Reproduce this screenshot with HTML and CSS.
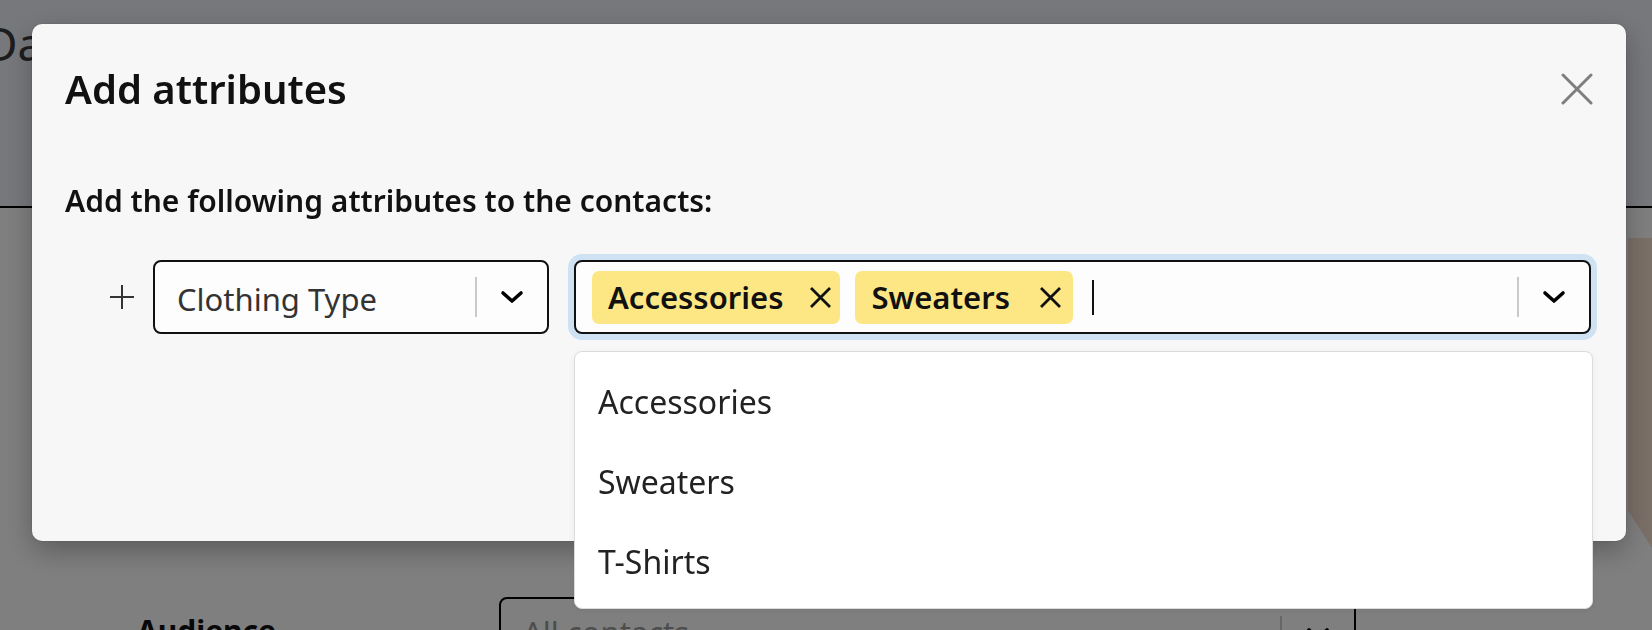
FILE: index.html
```html
<!DOCTYPE html>
<html lang="en">
<head>
<meta charset="utf-8">
<title>Add attributes</title>
<link rel="stylesheet" href="styles.css">
</head>
<body>
<div class="page">
  <header class="page-header">
    <h1 class="page-title">Dashboard</h1>
  </header>
  <main class="page-main">
    <div class="page-content">
      <div class="form-row">
        <span class="form-label">Audience</span>
        <div class="fake-select">
          <span class="fake-select-text">All contacts</span>
          <span class="fake-sep"></span>
          <span class="fake-chev">
            <svg width="24" height="14" viewBox="0 0 24 14"><path d="M3 3 L12 11 L21 3" fill="none" stroke="#000" stroke-width="3.6" stroke-linecap="round" stroke-linejoin="round"/></svg>
          </span>
        </div>
      </div>
    </div>
    <div class="hero"></div>
  </main>
</div>

<div class="overlay">
  <div class="modal" role="dialog" aria-labelledby="modal-title">
    <div class="modal-header">
      <h2 class="modal-title" id="modal-title">Add attributes</h2>
      <button class="close-btn" aria-label="Close">
        <svg width="32" height="32" viewBox="0 0 32 32"><path d="M2 2 L30 30 M30 2 L2 30" stroke="#7f7f7f" stroke-width="3" stroke-linecap="round"/></svg>
      </button>
    </div>
    <p class="modal-subtitle">Add the following attributes to the contacts:</p>
    <div class="attr-row">
      <span class="plus-icon">
        <svg width="24" height="26" viewBox="0 0 24 26"><path d="M12 1 V25 M0 13 H24" stroke="#333" stroke-width="2"/></svg>
      </span>
      <div class="select attr-select">
        <span class="select-value">Clothing Type</span>
        <span class="select-sep"></span>
        <span class="select-chev">
          <svg width="24" height="14" viewBox="0 0 24 14"><path d="M3 3 L12 11 L21 3" fill="none" stroke="#000" stroke-width="3.6" stroke-linecap="round" stroke-linejoin="round"/></svg>
        </span>
      </div>
      <div class="select multi-select">
        <div class="tags">
          <span class="tag">Accessories
            <span class="tag-x"><svg width="23" height="23" viewBox="0 0 23 23"><path d="M2 2 L21 21 M21 2 L2 21" stroke="#111" stroke-width="2.8"/></svg></span>
          </span>
          <span class="tag tag-wide">Sweaters
            <span class="tag-x"><svg width="23" height="23" viewBox="0 0 23 23"><path d="M2 2 L21 21 M21 2 L2 21" stroke="#111" stroke-width="2.8"/></svg></span>
          </span>
          <span class="caret"></span>
        </div>
        <span class="select-sep"></span>
        <span class="select-chev">
          <svg width="24" height="14" viewBox="0 0 24 14"><path d="M3 3 L12 11 L21 3" fill="none" stroke="#000" stroke-width="3.6" stroke-linecap="round" stroke-linejoin="round"/></svg>
        </span>
        <ul class="menu">
          <li class="menu-item">Accessories</li>
          <li class="menu-item">Sweaters</li>
          <li class="menu-item">T-Shirts</li>
        </ul>
      </div>
    </div>
  </div>
</div>
</body>
</html>
```

FILE: styles.css
```css
* { box-sizing: border-box; }

html, body {
  margin: 0;
  padding: 0;
  width: 1652px;
  height: 630px;
  overflow: hidden;
  font-family: "Noto Sans", "Open Sans", sans-serif;
}

/* ---------- page behind the dialog ---------- */
.page {
  width: 1652px;
  height: 630px;
  background: #ffffff;
}

.page-header {
  height: 208px;
  background: #edf1f8;
  border-bottom: 2px solid #000;
  padding-top: 16px;
}

.page-title {
  margin: 0 0 0 -16px;
  font-size: 46px;
  font-weight: 400;
  line-height: 54px;
  color: #3a3a3a;
}

.page-main {
  display: flex;
  justify-content: space-between;
}

.page-content {
  padding-top: 389px;
  padding-left: 137px;
}

.form-row {
  display: flex;
  align-items: flex-start;
}

.form-label {
  width: 362px;
  font-size: 30px;
  font-weight: 700;
  line-height: 40px;
  padding-top: 14px;
  color: #111;
}

.fake-select {
  width: 857px;
  height: 74px;
  border: 2px solid #000;
  border-radius: 8px;
  display: flex;
  background: #fff;
}

.fake-select-text {
  flex: 1;
  padding-left: 22px;
  padding-top: 12px;
  font-size: 31px;
  line-height: 42px;
  color: #9a9a9a;
}

.fake-sep {
  width: 2px;
  height: 40px;
  margin-top: 17px;
  background: #ccc;
}

.fake-chev {
  width: 72px;
  display: flex;
  justify-content: center;
  padding-top: 28px;
}

.hero {
  width: 24px;
  height: 310px;
  margin-top: 30px;
  background: #f6e0d0;
  clip-path: polygon(0 0, 100% 0, 100% 100%, 0 88%);
}

/* ---------- overlay + dialog ---------- */
.overlay {
  position: fixed;
  inset: 0;
  background: rgba(0, 0, 0, 0.5);
  padding: 24px 0 0 32px;
}

.modal {
  width: 1594px;
  height: 517px;
  background: #f7f7f7;
  border-radius: 10px;
  box-shadow: 0 0 0 1px rgba(0, 0, 0, 0.06), 0 10px 28px rgba(0, 0, 0, 0.28);
  padding: 45px 33px 0 33px;
  display: flex;
  flex-direction: column;
}

.modal-header {
  display: flex;
  justify-content: space-between;
  align-items: center;
  height: 40px;
}

.modal-title {
  margin: 0;
  font-size: 40px;
  line-height: 40px;
  font-weight: 600;
  color: #111;
}

.close-btn {
  width: 32px;
  height: 32px;
  padding: 0;
  border: 0;
  background: none;
  display: flex;
}

.modal-subtitle {
  margin: 77px 0 0 0;
  font-size: 30px;
  line-height: 30px;
  font-weight: 600;
  color: #111;
}

.attr-row {
  margin-top: 44px;
  padding-left: 45px;
  display: flex;
  align-items: center;
}

.plus-icon {
  display: flex;
  margin-right: 19px;
}

.select {
  height: 74px;
  border: 2px solid #111;
  border-radius: 8px;
  background: #fdfdfd;
  display: flex;
  align-items: center;
}

.attr-select {
  width: 396px;
}

.select-value {
  flex: 1;
  padding-left: 22px;
  padding-top: 3px;
  font-size: 31px;
  color: #333;
}

.select-sep {
  width: 2px;
  height: 40px;
  background: #c9c9c9;
}

.select-chev {
  width: 70px;
  display: flex;
  justify-content: center;
}

.multi-select {
  width: 1017px;
  margin-left: 25px;
  position: relative;
  box-shadow: 0 0 0 6px #cfe2f4;
}

.tags {
  flex: 1;
  display: flex;
  align-items: center;
  padding-left: 16px;
  gap: 15px;
}

.tag {
  height: 53px;
  display: flex;
  align-items: center;
  padding: 0 8px 0 16px;
  background: #fde784;
  border-radius: 7px;
  font-size: 31px;
  font-weight: 600;
  color: #111;
}

.tag-wide {
  padding-right: 11px;
}

.tag-x {
  display: flex;
  margin-left: 26px;
}

.tag-wide .tag-x {
  margin-left: 29px;
}

.caret {
  width: 2px;
  height: 35px;
  background: #111;
  margin-left: 4px;
}

.menu {
  position: absolute;
  top: calc(100% + 19px);
  left: -2px;
  width: 1019px;
  margin: 0;
  padding: 10px 0 6px;
  list-style: none;
  background: #fff;
  border: 1px solid #dcdcdc;
  border-radius: 8px;
  box-shadow: 0 2px 6px rgba(0, 0, 0, 0.06);
}

.menu-item {
  height: 80px;
  line-height: 80px;
  padding-left: 23px;
  font-size: 32px;
  color: #222;
}
```
